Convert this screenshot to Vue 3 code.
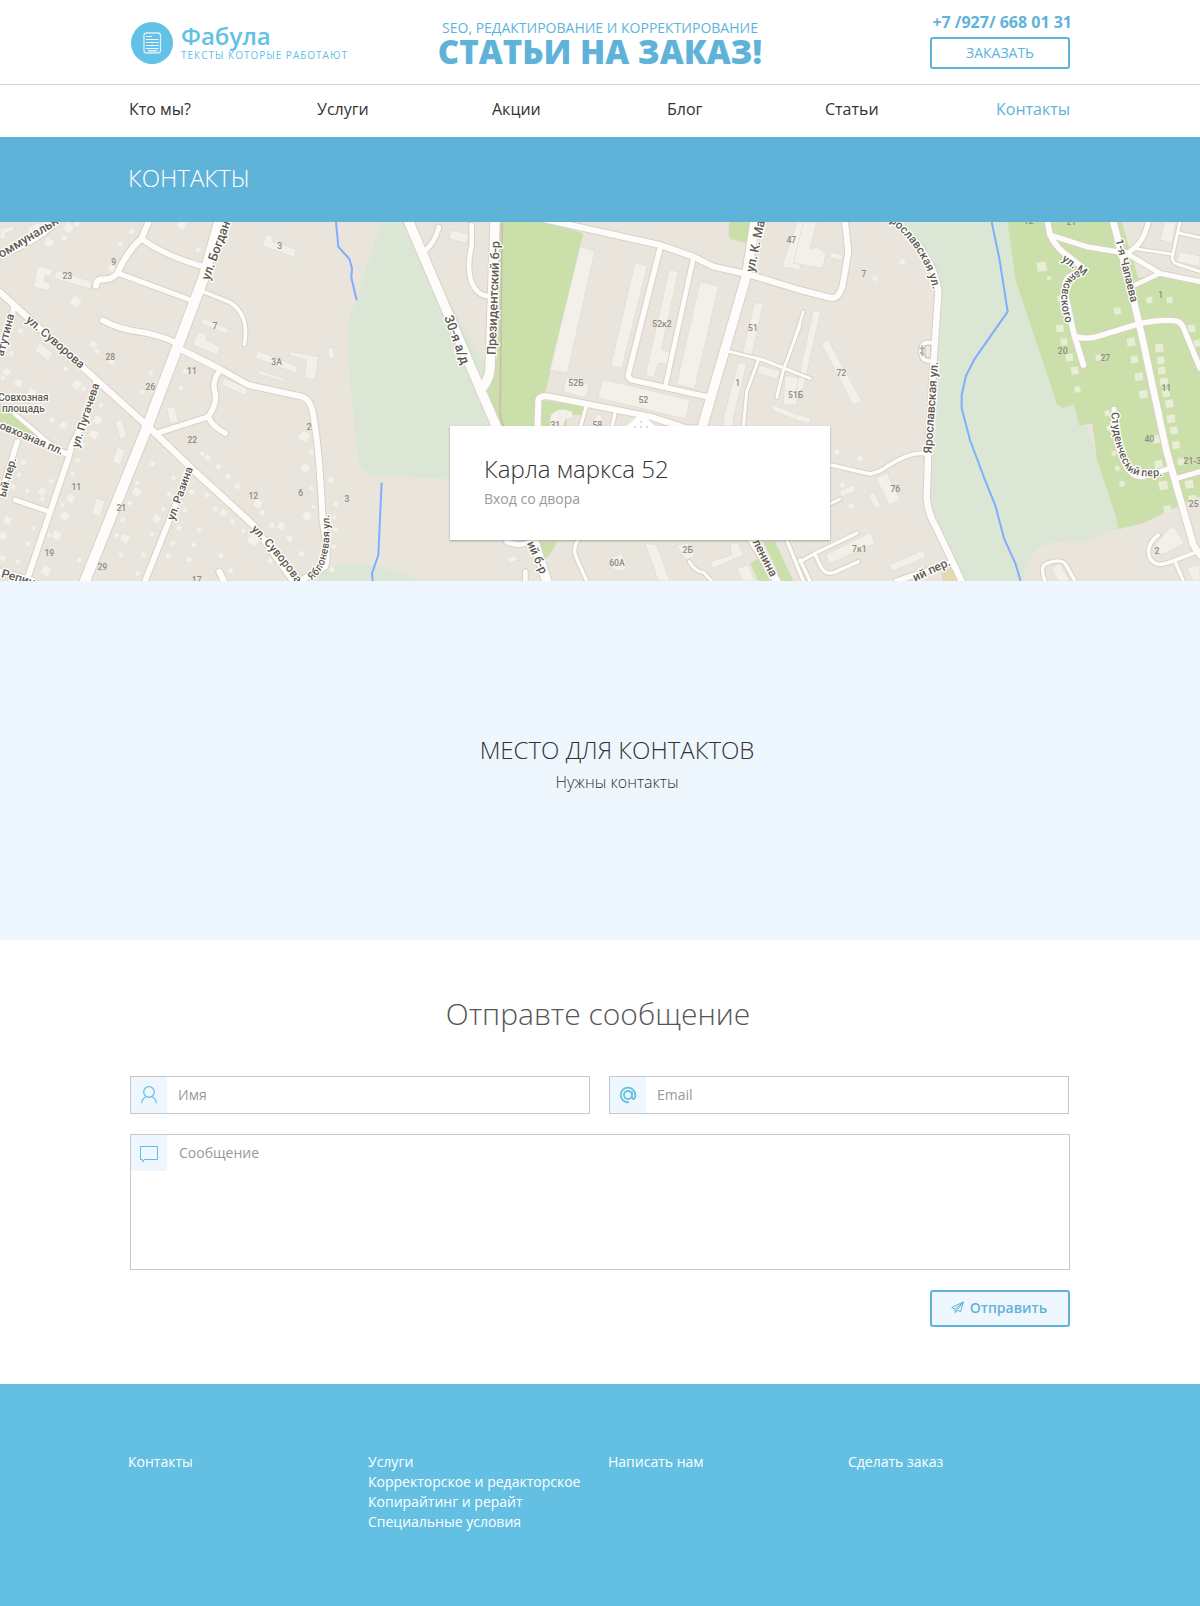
<script setup>
import { ref } from 'vue'

const name = ref('')
const email = ref('')
const message = ref('')

const nav = ['Кто мы?', 'Услуги', 'Акции', 'Блог', 'Статьи', 'Контакты']
const active = 'Контакты'

const footerColumns = [
  ['Контакты'],
  ['Услуги', 'Корректорское и редакторское', 'Копирайтинг и рерайт', 'Специальные условия'],
  ['Написать нам'],
  ['Сделать заказ'],
]

/* Map geometry, three units to a pixel */
const meadows = [
  'M1145 21L1085 200L1070 255L1045 310L1043 420L1060 600L1072 710Q1080 780 1120 780L1350 793L1560 800V633L1215 21Z',
  'M880 1098Q950 1050 1060 1045Q1150 1050 1260 1098Z',
  'M2690 21H3060L3360 938L3235 985L3200 978L3140 985Q3075 1020 3070 1098H2890L2800 940L2780 850L2790 700L2815 400V200L2760 120Z',
]
const parks = [
  'M1500 21H1632L1750 55L1740 95L1637 530L1610 545L1605 633H1490L1445 530L1490 430Z',
  'M1625 555L1750 575L1745 600H1700V633H1625Z',
  'M2188 21H2260L2245 85L2200 75Q2185 70 2186 50Z',
  'M1600 980H1670Q1655 1020 1630 1035Z',
  'M2250 1045L2275 1030L2310 1098H2275Z',
  'M2290 980H2325L2380 1098H2345Z',
  'M0 565L40 595L125 670L0 625Z',
  'M3022 21H3365L3415 190L3480 175L3600 205V845L3540 870L3490 895L3430 925L3355 943L3345 895L3310 790L3290 730L3277 625L3237 632L3222 568L3188 580L3170 565L3048 200Z',
]
const streams = [
  'M1008 21L1015 95L1048 132L1056 160L1054 188L1070 256',
  'M1145 803L1135 1020L1116 1075L1118 1098',
  'M2975 21L2998 130L3023 290L2925 430L2898 482L2885 540V580L2910 675L2955 795L2987 875L3012 970L3046 1045L3062 1098',
]
const buildings = [
  'M112 153L158 162L153 184L136 182L133 200L153 205L148 228L100 216Z',
  'M168 165L275 200L270 222L163 190Z',
  'M798 58L822 65L818 80L890 103L883 128L788 92Z',
  'M610 308L687 342L682 358L603 325Z',
  'M595 350L620 358L618 375L660 395L655 420L578 390Z',
  'M773 408L895 455L888 475L766 428Z',
  'M778 466L855 492L852 500L773 476Z',
  'M870 410L957 425L944 495L912 487L920 435L867 420Z',
  'M672 490L744 520L736 542L666 510Z',
  'M118 384L160 414L144 438L103 405Z',
  'M500 578L524 575L536 622L510 625Z',
  'M345 618L366 612L381 665L360 673Z',
  'M352 695L376 705L360 750L337 742Z',
  'M288 850L315 858L300 905L275 897Z',
  'M0 40L40 33L45 45L15 55L18 68L0 75Z',
  'M985 398L1000 398L1003 430L985 432Z',
  'M80 38L120 21H160L90 55Z',
  'M1352 45L1407 57L1400 84L1347 72Z',
  'M1740 95L1785 107L1702 475L1650 465Z',
  'M1905 143L1942 153L1865 460L1832 452Z',
  'M2008 163L2035 170L1984 404L2012 412L2000 448L1974 445L1962 488L1936 480Z',
  'M2100 200L2156 213L2084 522L2030 508Z',
  'M1698 485L1767 507L1758 548L1690 530Z',
  'M1808 493L2070 555L2057 612L1793 548Z',
  'M1650 610Q1655 585 1690 583L1715 588L1720 605L1695 615L1690 633H1650Z',
  'M1790 598L1807 600L1803 633H1775Z',
  'M2264 262L2291 265L2255 420L2228 412Z',
  'M2215 443L2240 447L2202 600L2198 633H2170L2172 600Z',
  'M2275 450L2340 468L2333 492L2273 475Z',
  'M2355 480L2400 490L2390 570L2350 570Z',
  'M2320 570L2420 610L2410 625L2315 585Z',
  'M2392 21H2440L2398 165L2345 155Z',
  'M2450 95L2478 115L2468 160L2380 145L2410 21H2450L2430 102Z',
  'M2490 110L2530 120L2526 136L2488 128Z',
  'M2440 285L2462 290L2410 520L2385 540Z',
  'M2463 385L2484 375L2585 558L2560 570Z',
  'M2385 595L2432 610L2428 625L2385 615Z',
  'M2628 790L2662 775L2700 855L2668 870Z',
  'M2605 840L2622 832L2643 872L2625 882Z',
  'M2478 1018L2612 952L2625 985L2486 1048Z',
  'M2668 1050L2770 1005L2778 1025L2675 1070Z',
  'M2518 828L2562 808L2568 828L2524 845Z',
  'M3465 990L3508 940L3525 938L3553 985L3490 1018L3472 1012Z',
  'M3495 21H3528L3515 85L3480 75Z',
  'M3540 110L3600 122V155L3530 140Z',
  'M3155 1060L3180 1045L3210 1098H3175Z',
  'M3560 1060L3600 1048V1098H3580Z',
  'M1830 1030L1865 1015L1880 1045L1875 1070L1840 1065Z',
  'M1935 985L1970 990L2010 1098H1975Z',
  'M2130 1040L2195 1020L2190 985H2215L2230 1020L2140 1060Z',
  'M2030 990L2065 985L2085 1025L2055 1035Z',
  'M1520 1030L1545 1020L1555 1035L1530 1045Z',
  'M2210 1060L2245 1050L2265 1098H2230Z',
]
/* x, y and size of the houses */
const houses = [
  [205, 38, 24], [147, 82, 22], [193, 69, 14], [230, 27, 14], [395, 50, 14], [361, 86, 12], [335, 160, 18], [594, 105, 12],
  [545, 30, 22], [227, 260, 26], [62, 348, 13], [34, 415, 13], [20, 470, 18], [55, 505, 20], [8, 490, 12], [95, 533, 20],
  [280, 388, 18], [291, 408, 12], [334, 440, 16], [196, 462, 12], [230, 510, 22], [250, 521, 12], [452, 474, 13], [427, 530, 12],
  [555, 469, 12], [542, 520, 12], [303, 571, 12], [293, 616, 22], [281, 659, 22], [248, 690, 13], [191, 632, 19], [155, 616, 13],
  [233, 736, 12], [218, 777, 12], [71, 743, 14], [57, 779, 12], [39, 815, 12], [82, 828, 12], [126, 830, 19], [128, 853, 12],
  [153, 798, 12], [22, 916, 20], [8, 962, 20], [100, 940, 12], [84, 986, 12], [212, 851, 20], [187, 870, 12], [194, 904, 22],
  [170, 960, 22], [147, 961, 11], [238, 1035, 13], [138, 1068, 24], [53, 1040, 12], [8, 1030, 14], [411, 830, 22], [412, 805, 12],
  [389, 864, 12], [368, 915, 12], [350, 961, 12], [375, 971, 22], [363, 1019, 14], [458, 747, 13], [521, 789, 12], [508, 838, 12],
  [490, 881, 12], [470, 912, 20], [457, 958, 12], [432, 1019, 12], [413, 1075, 12], [575, 830, 13], [555, 886, 12], [537, 938, 12],
  [597, 944, 12], [518, 985, 12], [505, 1023, 13], [581, 990, 12], [568, 1033, 14], [607, 716, 12], [623, 728, 16], [655, 754, 15],
  [684, 784, 15], [713, 814, 15], [620, 840, 12], [647, 882, 12], [671, 893, 18], [697, 918, 13], [730, 948, 12], [760, 975, 28],
  [773, 866, 22], [787, 893, 14], [817, 931, 13], [843, 934, 20], [868, 970, 16], [905, 1016, 15], [811, 1037, 13], [663, 1022, 14],
  [692, 1067, 13], [913, 664, 26], [933, 712, 12], [916, 758, 22], [935, 820, 11], [921, 904, 22], [941, 876, 11], [993, 795, 13],
  [1007, 867, 13], [1003, 907, 12], [1007, 944, 12], [1001, 995, 12], [996, 1063, 15], [2708, 140, 14], [2625, 191, 14],
  [2511, 711, 13], [2580, 730, 15], [2527, 810, 13], [2554, 872, 13], [3125, 155, 28], [3147, 190, 12], [3352, 288, 20],
  [3448, 255, 18], [3509, 255, 18], [3180, 340, 22], [3192, 380, 20], [3208, 428, 22], [3224, 467, 22], [3232, 523, 18],
  [3296, 428, 18], [3393, 381, 24], [3403, 433, 22], [3417, 485, 24], [3430, 538, 24], [3478, 399, 24], [3482, 436, 22],
  [3485, 467, 22], [3492, 501, 24], [3498, 535, 22], [3508, 566, 24], [3513, 611, 24], [3522, 646, 22], [3528, 690, 22],
  [3468, 673, 24], [3476, 748, 24], [3543, 740, 20], [3490, 811, 26], [3568, 808, 24], [3502, 882, 22], [3578, 853, 24],
  [3366, 806, 16], [3322, 595, 16], [3327, 640, 14], [3342, 715, 14], [3352, 760, 14], [3575, 340, 22], [3590, 385, 20], [3180, 250, 16],
]
/* path and width of the carriageway */
const roads = [
  ['M445 21L425 70Q380 110 352 175Q335 195 305 193Q288 195 288 212', 18],
  ['M0 118Q90 90 170 21', 20],
  ['M425 72Q500 125 610 155', 16],
  ['M355 175L580 258', 15],
  ['M610 230L690 262Q750 300 733 388', 11],
  ['M308 316Q360 345 430 352Q490 365 530 385', 17],
  ['M540 402L660 462L745 510L905 545Q935 550 943 620Q960 730 968 920Q988 1020 975 1055L900 1098', 18],
  ['M660 465Q635 500 644 530Q655 560 625 605L470 655', 16],
  ['M625 605Q632 630 676 655', 16],
  ['M0 232L290 495L450 640L585 770L760 930L880 1098', 19],
  ['M40 275L38 300Q20 360 0 420', 15],
  ['M290 495Q270 590 215 690L205 730L80 1098', 17],
  ['M45 598L180 712L205 718', 12],
  ['M0 630L205 718', 16],
  ['M52 680L30 750L0 840', 16],
  ['M45 855L148 890', 14],
  ['M572 765L530 860L435 1098', 17],
  ['M658 1070L672 1098', 18],
  ['M658 21L610 190L440 640L255 1098', 31],
  ['M0 1070L100 1098', 18],
  ['M1278 105Q1305 80 1317 36', 14],
  ['M1415 30V90Q1395 180 1425 220Q1440 243 1465 243', 14],
  ['M1485 21L1470 460Q1470 490 1442 525', 28],
  ['M1222 10L1440 520L1500 660L1640 1098', 28],
  ['M1620 10L1980 90L2080 125L2140 155L2245 178L2400 225L2490 248Q2520 255 2530 200L2545 110L2535 21', 18],
  ['M1980 100L1887 470Q1880 488 1895 495L2120 545', 16],
  ['M2080 130L1998 505', 14],
  ['M2265 21L2240 180L2100 660', 28],
  ['M1612 660L1615 555Q1620 540 1650 545L1950 605L2060 640H2110', 18],
  ['M1760 570L1740 640', 10],
  ['M1845 595L1835 640', 10],
  ['M2190 410L2290 435L2430 490', 9],
  ['M2400 330L2350 465L2330 548', 9],
  ['M2275 435L2240 530L2230 640', 9],
  ['M2410 290L2385 370', 8],
  ['M1520 980Q1560 1000 1600 975', 15],
  ['M1735 975Q1715 1000 1730 1030L1760 1098', 10],
  ['M1576 1070V1098', 14],
  ['M2068 1040Q2085 1070 2110 1072L2135 1098', 9],
  ['M2240 950L2330 1098', 22],
  ['M2350 950L2410 1098', 10],
  ['M2680 21Q2800 110 2815 230L2800 450L2785 700L2780 850Q2785 900 2810 940L2885 1098', 19],
  ['M2800 383H2780Q2762 385 2762 410Q2765 438 2785 438H2800', 11],
  ['M2470 745L2610 777Q2640 770 2660 755Q2740 705 2780 718', 11],
  ['M2400 1040L2445 1015L2570 955', 10],
  ['M2400 1035L2430 1098', 10],
  ['M2445 1018L2465 1060Q2480 1080 2500 1073L2575 1040', 10],
  ['M2400 910L2520 852', 9],
  ['M2690 1098L2850 1045', 16],
  ['M3143 21L3150 60Q3170 100 3200 120L3245 155Q3250 175 3220 180Q3190 190 3195 230L3220 350L3250 450', 17],
  ['M3150 60L3260 95L3380 115Q3430 90 3445 21', 15],
  ['M3380 115L3480 175L3600 200', 15],
  ['M3405 210L3480 175', 13],
  ['M3400 100L3520 118', 8],
  ['M3540 21L3518 120Q3512 145 3540 150L3600 170', 9],
  ['M3540 55L3600 68', 9],
  ['M3340 21L3395 230L3425 360L3500 710L3580 990L3600 1020', 20],
  ['M3225 365Q3260 375 3300 362L3420 325Q3500 310 3535 320Q3550 330 3555 350L3600 460', 16],
  ['M3342 583Q3345 680 3370 740Q3395 790 3430 785L3510 760', 15],
  ['M3530 790L3600 770', 15],
  ['M3475 960Q3435 990 3450 1030Q3465 1055 3500 1045L3580 1015', 11],
  ['M3525 1040L3550 1098', 10],
  ['M3135 1098Q3118 1055 3140 1045Q3180 1030 3195 1045L3225 1098', 10],
]
/* straight street names: text, x, y, angle, size */
const streets = [
  ['оммунальн', 4, 130, -31, 38], ['ул. Богдан', 628, 197, -70, 38], ['атутина', 10, 425, -75, 35],
  ['ул. Суворова', 76, 318, 41, 36], ['ул. Пугачева', 236, 700, -72, 34], ['овхозная пл.', -4, 640, 23, 34],
  ['ый пер.', 16, 848, -74, 34], ['ул. Разина', 522, 918, -70, 34], ['Репин', 2, 1086, 16, 36],
  ['Президентский б-р', 1487, 420, -88, 38], ['30-я а/д', 1332, 307, 70, 40],
  ['ул. К. Ма', 2262, 173, -78, 38], ['ий б-р', 1580, 985, 66, 36], ['ленина', 2257, 980, 63, 36],
  ['Ярославская ул.', 2795, 716, -86, 36], ['1-я Чапаева', 3346, 75, 76, 34], ['ий пер.', 2745, 1100, -25, 36],
  ['ул. М', 3184, 136, 36, 34],
]
const curvedStreets = [
  ['orchard', 'M934 1096Q1002 1050 986 880', 'Яблоневая ул.', 32],
  ['suvorova', 'M752 944Q840 1030 905 1130', 'ул. Суворова', 35],
  ['yaroslav', 'M2668 20Q2785 110 2806 260', 'рославская ул.', 35],
  ['student', 'M3334 592Q3340 700 3378 760Q3400 795 3510 779', 'Студенческий пер.', 33],
  ['mayak', 'M3236 166Q3150 200 3206 350', 'аяковского', 34],
]
/* house numbers: text, x, y */
const numbers = [
  ['23', 202, 192], ['9', 341, 151], ['3', 839, 102], ['7', 645, 342], ['28', 331, 436], ['3А', 830, 450], ['11', 576, 477],
  ['26', 451, 526], ['2', 927, 645], ['22', 577, 685], ['11', 229, 825], ['12', 760, 852], ['6', 902, 843], ['3', 1041, 861],
  ['21', 364, 888], ['19', 148, 1023], ['29', 307, 1065], ['17', 590, 1103], ['52к2', 1986, 336], ['52Б', 1728, 514],
  ['52', 1930, 564], ['31', 1666, 640], ['58', 1792, 640], ['51', 2259, 348], ['47', 2374, 84], ['1', 2213, 513], ['51Б', 2387, 550],
  ['60А', 1851, 1053], ['2Б', 2063, 1014], ['7', 2592, 186], ['72', 2524, 483], ['76', 2686, 831], ['7к1', 2578, 1011],
  ['12', 3086, 28], ['21', 3214, 31], ['1', 3482, 248], ['20', 3188, 417], ['27', 3316, 438], ['11', 3499, 528], ['40', 3448, 681],
  ['21-3', 3577, 747], ['25', 3581, 876], ['2', 3471, 1017],
]
</script>

<template>
  <div class="page">
    <header class="top">
      <div class="container top-row">
        <a class="logo" href="#">
          <svg class="logo-mark" viewBox="0 0 42 42" aria-hidden="true">
            <circle cx="21" cy="21" r="21" fill="#62c1e7" />
            <rect x="13" y="11" width="16.5" height="20" rx="2.5" fill="none" stroke="#d9f0fa" stroke-width="1.3" />
            <path d="M15 14.5h6M15 17.5h12.500M15 20.5h12.500M15 23.5h12.500M15 26.500h12.500M17 28.800h9.500" stroke="#fff" stroke-width="1.2" />
          </svg>
          <span class="logo-text">
            <strong>Фабула</strong>
            <small>ТЕКСТЫ КОТОРЫЕ РАБОТАЮТ</small>
          </span>
        </a>
        <div class="slogan">
          <span>SEO, РЕДАКТИРОВАНИЕ И КОРРЕКТИРОВАНИЕ</span>
          <strong>СТАТЬИ НА ЗАКАЗ!</strong>
        </div>
        <div class="order">
          <a class="phone" href="tel:+79276680131">+7 /927/ 668 01 31</a>
          <button type="button" class="btn">ЗАКАЗАТЬ</button>
        </div>
      </div>
    </header>

    <nav class="container nav">
      <a v-for="item in nav" :key="item" href="#" :class="{ active: item === active }">{{ item }}</a>
    </nav>

    <div class="banner">
      <div class="container"><h1>КОНТАКТЫ</h1></div>
    </div>

    <section class="map">
      <svg viewBox="0 21 3600 1077" preserveAspectRatio="xMidYMid slice" role="img" aria-label="Карта">
        <rect y="0" width="3600" height="1120" fill="#e9e5dc" />
        <path v-for="d in meadows" :key="d" :d="d" fill="#dce6d5" />
        <path v-for="d in parks" :key="d" :d="d" fill="#cadfaa" />
        <path d="M2825 1075L2855 1055L2880 1098H2828Z" fill="#e6d8b0" />
        <path d="M1507 21L1500 600L1512 640" fill="none" stroke="#c9bfae" stroke-width="5" />
        <g fill="none" stroke="#7eaeff" stroke-width="6" stroke-linejoin="round">
          <path v-for="d in streams" :key="d" :d="d" />
        </g>
        <g fill="#f3f0e9" stroke="#dedbd3" stroke-width="2">
          <path v-for="d in buildings" :key="d" :d="d" />
        </g>
        <g fill="#f4f1ea">
          <rect
            v-for="([x, y, s], i) in houses" :key="i" :x="x - s / 2" :y="y - s / 2" :width="s" :height="s"
            :class="{ 'park-house': x > 3050 }"
            :transform="`rotate(${x > 3050 ? -8 : 30} ${x} ${y})`" />
        </g>
        <g fill="none" stroke="#d8d1c5" stroke-linecap="round" stroke-linejoin="round">
          <path v-for="[d, w] in roads" :key="d" :d="d" :stroke-width="w + 6" />
        </g>
        <g fill="none" stroke="#fdfcfb" stroke-linecap="round" stroke-linejoin="round">
          <path v-for="[d, w] in roads" :key="d" :d="d" :stroke-width="w" />
        </g>
        <g class="numbers">
          <text v-for="([t, x, y], i) in numbers" :key="i" :x="x" :y="y">{{ t }}</text>
        </g>
        <path d="M2766 390V424M2758 400H2774M2760 412L2772 418" stroke="#aaa59c" stroke-width="4" />
        <rect x="2776" y="392" width="16" height="34" fill="#efebe3" stroke="#cfc8bc" stroke-width="3" />
        <g class="streets">
          <text
            v-for="[t, x, y, a, s] in streets" :key="t + x" :font-size="s"
            :transform="`translate(${x} ${y}) rotate(${a})`">{{ t }}</text>
          <text class="square" x="70" y="558">Совхозная</text>
          <text class="square" x="70" y="591">площадь</text>
          <template v-for="[id, d, t, s] in curvedStreets" :key="id">
            <path :id="id" :d="d" fill="none" stroke="none" />
            <text :font-size="s"><textPath :href="'#' + id">{{ t }}</textPath></text>
          </template>
        </g>
      </svg>
      <div class="place">
        <svg class="pointer" viewBox="0 0 28 16" aria-hidden="true">
          <path d="M0 13L14 0L28 13V16H0Z" fill="#fff" />
          <path d="M13 8h2v2h-2zM7 13h2v2H7zM13 13h2v2h-2zM19 13h2v2h-2z" fill="#dcdcdc" />
        </svg>
        <h2>Карла маркса 52</h2>
        <p>Вход со двора</p>
      </div>
    </section>

    <section class="contacts">
      <h2>МЕСТО ДЛЯ КОНТАКТОВ</h2>
      <p>Нужны контакты</p>
    </section>

    <section class="feedback">
      <h2>Отправте сообщение</h2>
      <form @submit.prevent>
        <div class="field-row">
          <label class="field">
            <span class="field-icon">
              <svg width="18" height="18" viewBox="0 0 18 18" fill="none" stroke="#62bfe3" stroke-width="1.2" aria-hidden="true">
                <circle cx="9" cy="6" r="5.3" />
                <path d="M1.6 17.2C2 14 3.6 12 5.8 10.8M16.4 17.2C16 14 14.4 12 12.2 10.8" />
              </svg>
            </span>
            <input v-model="name" type="text" placeholder="Имя" aria-label="Имя" />
          </label>
          <label class="field">
            <span class="field-icon">
              <svg width="18" height="18" viewBox="0 0 18 18" fill="none" stroke="#62bfe3" stroke-width="1.8" aria-hidden="true">
                <circle cx="9" cy="9" r="4" />
                <path d="M13 5.5V10.5Q13 13 14.8 13Q16.3 12.6 16.3 9A7.3 7.3 0 1 0 10 16.2" />
              </svg>
            </span>
            <input v-model="email" type="email" placeholder="Email" aria-label="Email" />
          </label>
        </div>
        <label class="field field-message">
          <span class="field-icon">
            <svg width="20" height="20" viewBox="0 0 20 20" fill="none" stroke="#62bfe3" stroke-width="1" aria-hidden="true">
              <path d="M1.5 3.5H18.5V16.5H5.5L3.5 19V16.5H1.5Z" />
            </svg>
          </span>
          <textarea v-model="message" placeholder="Сообщение" aria-label="Сообщение"></textarea>
        </label>
        <button type="submit" class="btn btn-send">
          <svg width="13" height="13" viewBox="0 0 13 13" fill="none" stroke="#5fb3d9" stroke-width="1" stroke-linejoin="round" aria-hidden="true">
            <path d="M.7 6.5L12.4 .9L9.5 10.8L6.2 8.9L4.3 11.8L4 8.2ZM4 8.2L12.4 .9L6.2 8.9" />
          </svg>
          Отправить
        </button>
      </form>
    </section>

    <footer class="footer">
      <div class="container footer-grid">
        <ul v-for="col in footerColumns" :key="col[0]">
          <li v-for="link in col" :key="link"><a href="#">{{ link }}</a></li>
        </ul>
      </div>
    </footer>
  </div>
</template>

<style>
body {
  margin: 0;
  background: #fff;
}
</style>

<style scoped>
.page {
  font-family: "Open Sans", "Noto Sans", sans-serif;
  font-size: 14px;
  line-height: 20px;
  color: #333;
}
h1, h2, p, ul {
  margin: 0;
  padding: 0;
  font-weight: 300;
}
a {
  color: inherit;
  text-decoration: none;
}
.container {
  box-sizing: border-box;
  max-width: 944px;
  margin: 0 auto;
}
.top {
  border-bottom: 1px solid #d4d4d4;
}
.top-row {
  display: grid;
  grid-template-columns: 1fr auto 1fr;
  height: 84px;
  color: #5fb3d9;
}
.logo {
  display: flex;
  align-items: flex-start;
  gap: 8px;
  padding: 22px 0 0 3px;
  color: #62c1e7;
}
.logo-mark {
  width: 42px;
  height: 42px;
}
.logo-text strong,
.logo-text small {
  display: block;
  white-space: nowrap;
}
.logo-text strong {
  font-size: 24px;
  line-height: 28px;
  font-weight: 600;
}
.logo-text small {
  font-size: 10px;
  line-height: 10px;
  letter-spacing: 1px;
}
.slogan {
  padding-top: 18px;
  text-align: center;
}
.slogan span,
.slogan strong {
  display: block;
  white-space: nowrap;
}
.slogan strong {
  font-size: 33px;
  line-height: 28px;
  font-weight: 800;
}
.order {
  justify-self: end;
  padding: 12px 2px 0 0;
  text-align: right;
}
.phone {
  display: block;
  margin-right: -2px;
  font-size: 16px;
  font-weight: 700;
}
.btn {
  box-sizing: border-box;
  width: 140px;
  height: 32px;
  padding: 0;
  border: 2px solid #5fb3d9;
  border-radius: 3px;
  background: #fff;
  color: #5fb3d9;
  font: inherit;
  cursor: pointer;
}
.order .btn {
  margin-top: 5px;
}
.nav {
  display: grid;
  grid-template-columns: 188fr 175fr 175fr 158fr 171fr 76fr;
  height: 52px;
  padding-left: 1px;
  font-size: 16px;
  line-height: 48px;
}
.nav .active {
  color: #5fb3d9;
}
.banner {
  background: #5fb3d9;
  color: #fff;
}
.banner h1 {
  padding-bottom: 4px;
  font-size: 24px;
  line-height: 81px;
}
.map {
  position: relative;
  height: 359px;
}
.map > svg {
  display: block;
  width: 100%;
  height: 100%;
}
.park-house {
  fill: #e9edd6;
}
.numbers {
  font: 500 26px Roboto, sans-serif;
  fill: #8f8b84;
  text-anchor: middle;
}
.streets {
  font-family: Roboto, sans-serif;
  font-weight: 500;
  fill: #5f5b52;
  stroke: #fff;
  stroke-width: 8px;
  stroke-linejoin: round;
  paint-order: stroke;
}
.square {
  font-size: 30px;
  text-anchor: middle;
}
.place {
  position: absolute;
  left: calc(50% - 150px);
  top: 204px;
  box-sizing: border-box;
  width: 380px;
  padding: 25px 34px 29px;
  background: #fff;
  box-shadow: 0 1px 2px rgba(0, 0, 0, 0.3);
}
.pointer {
  position: absolute;
  left: 50%;
  top: -13px;
  width: 28px;
  margin-left: -13px;
}
.place h2 {
  font-size: 24px;
  line-height: 36px;
}
.place p {
  line-height: 24px;
  font-weight: 400;
  color: #999;
}
.contacts {
  display: flex;
  flex-direction: column;
  align-items: center;
  justify-content: center;
  min-height: 359px;
  padding: 6px 0 0 34px;
  box-sizing: border-box;
  background: #eff7fe;
}
.contacts h2 {
  font-size: 24px;
  line-height: 36px;
}
.contacts p {
  font-size: 16px;
  line-height: 28px;
}
.feedback {
  box-sizing: border-box;
  max-width: 940px;
  margin: 0 auto;
  padding: 50px 0 57px;
}
.feedback h2 {
  padding-right: 4px;
  font-size: 30px;
  line-height: 48px;
  text-align: center;
  color: #555;
}
.feedback form {
  display: flex;
  flex-direction: column;
  gap: 20px;
  margin-top: 38px;
}
.field-row {
  display: grid;
  grid-template-columns: 1fr 1fr;
  gap: 19px;
  padding-right: 1px;
}
.field {
  display: flex;
  border: 1px solid #c8c8c8;
}
.field-icon {
  display: flex;
  align-items: center;
  justify-content: center;
  width: 36px;
  height: 36px;
  background: #eff7fe;
}
.field input,
.field textarea {
  flex: 1;
  min-width: 0;
  box-sizing: border-box;
  border: 0;
  outline: 0;
  padding: 0 11px;
  background: transparent;
  font: inherit;
  color: #333;
}
.field textarea {
  height: 134px;
  padding: 8px 12px;
  resize: none;
}
.field ::placeholder {
  color: #999;
  opacity: 1;
}
.btn-send {
  display: flex;
  align-items: center;
  justify-content: center;
  gap: 6px;
  align-self: flex-end;
  height: 37px;
  padding: 0 2px 2px 0;
  background: #eff7fe;
  font-weight: 600;
}
.footer {
  background: #63c0e3;
  color: #fff;
}
.footer-grid {
  display: grid;
  grid-template-columns: repeat(3, 240px) 1fr;
  min-height: 222px;
  padding-top: 68px;
}
.footer ul {
  list-style: none;
}
.footer li {
  font-weight: 400;
}
</style>
